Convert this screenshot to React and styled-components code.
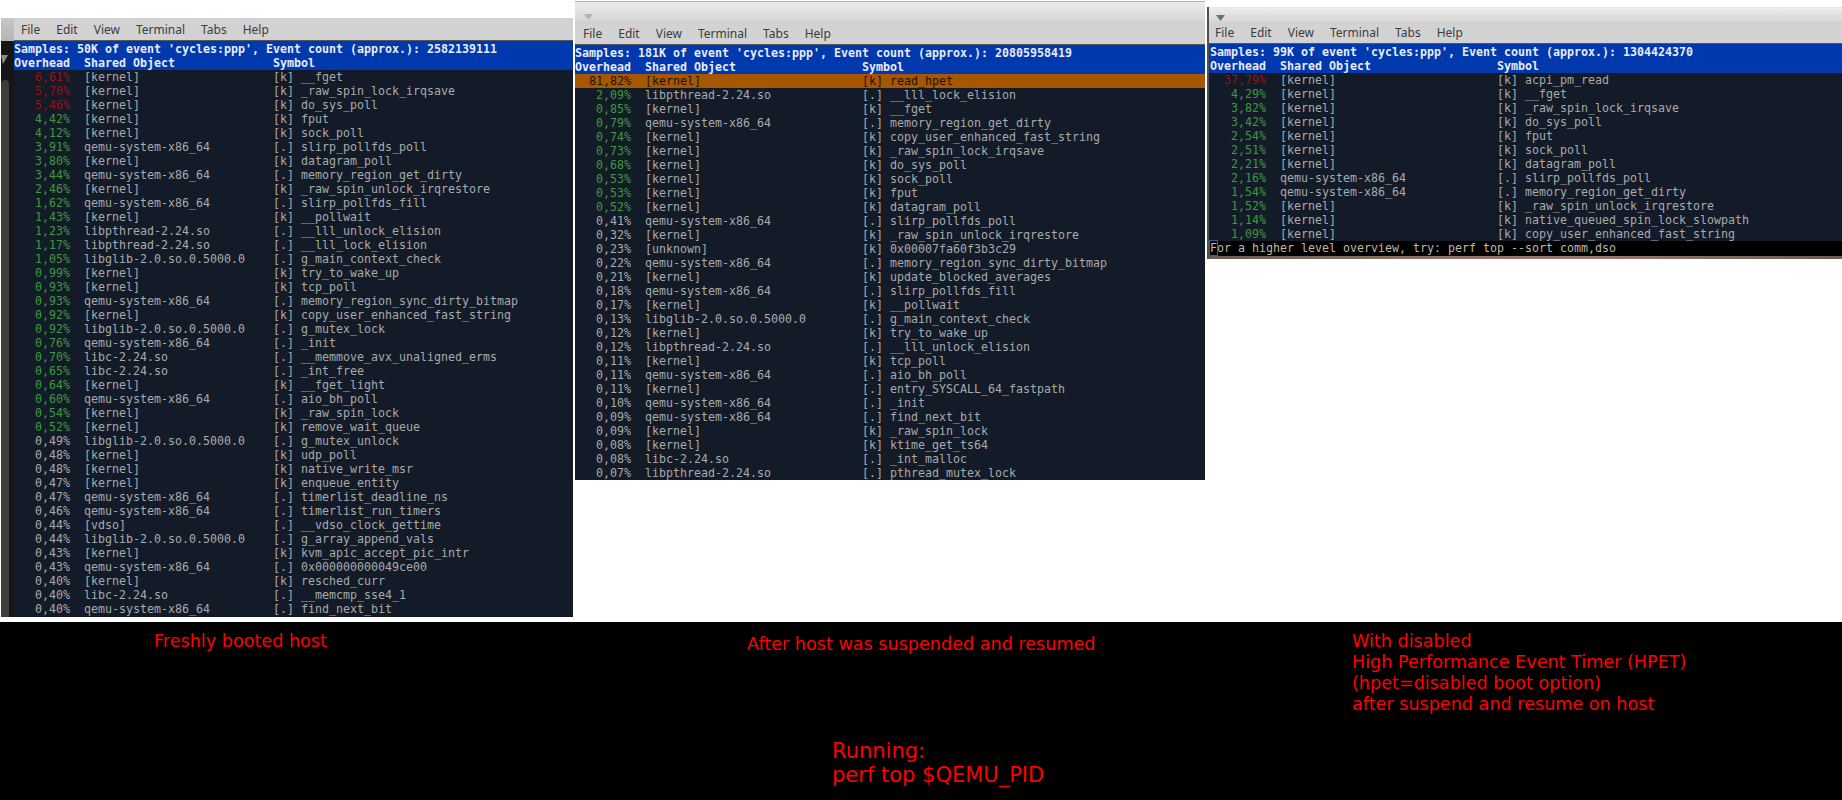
import styled, { createGlobalStyle } from 'styled-components'

const GlobalStyle = createGlobalStyle`
  html, body {
    margin: 0;
    padding: 0;
    background: #fff;
  }
`

const Page = styled.div`
  width: 1842px;
  height: 800px;
  overflow: hidden;
  display: flex;
  flex-direction: column;
`

// Upper white part with the three screenshots
const Shots = styled.div`
  height: 622px;
  flex: none;
  display: flex;
  align-items: flex-start;
  background: #fff;
`

const Win = styled.div`
  flex: none;
  width: ${(p) => p.$width}px;
  margin-top: ${(p) => p.$top}px;
  margin-left: ${(p) => p.$left}px;
  border-left: ${(p) => (p.$edge ? '2px solid #4f4f4f' : 'none')};
  box-sizing: border-box;
  display: flex;
  flex-direction: column;
`

const TitleBar = styled.div`
  height: ${(p) => p.$height}px;
  box-sizing: border-box;
  border-top: 1px solid ${(p) => p.$line};
  background: linear-gradient(#ececec, #d6d6d6);
  padding-left: ${(p) => p.$pad}px;
  display: flex;
  align-items: flex-end;
`

const Arrow = styled.svg`
  width: 9px;
  height: 6px;
  margin-bottom: 1px;
  display: block;
`

const MenuBar = styled.div`
  height: ${(p) => p.$height}px;
  background: #d2d2d2;
  border-bottom: 1px solid #555;
  box-sizing: border-box;
  padding-left: ${(p) => p.$pad}px;
  padding-top: ${(p) => p.$nudge || 0}px;
  display: flex;
  align-items: center;
  gap: 16px;
  font-family: "Noto Sans", sans-serif;
  font-size: 12px;
  color: #3c3c3c;
`

const Split = styled.div`
  display: flex;
`

const Main = styled.div`
  flex: 1;
  min-width: 0;
`

// Dark strip on the left side of the first window
const Gutter = styled.div`
  flex: none;
  width: 13px;
  background: #161616;
  display: flex;
  flex-direction: column;
  align-items: flex-start;
`

const GutterCap = styled.div`
  flex: none;
  width: 13px;
  height: 23px;
  background: linear-gradient(#c8c8c8, #b4b4b4);
`

const GutterArrow = styled.svg`
  width: 7px;
  height: 9px;
  margin: 14px 0 16px;
  display: block;
`

const Thumb = styled.div`
  flex: 1;
  width: 8px;
  background: #3d3d3d;
  border-radius: 4px 4px 0 0;
`

const Term = styled.div`
  background: #131a28;
  overflow: hidden;
  height: ${(p) => p.$height}px;
  padding-left: ${(p) => p.$inset || 0}px;
  font-family: "DejaVu Sans Mono", monospace;
  font-size: 11.63px;
  line-height: 14px;
  color: #a8abab;
  white-space: pre;
`

const Head = styled.div`
  background: #0038ae;
  color: #e8ecf5;
  font-weight: 700;
  height: 29px;
  margin-left: ${(p) => -p.$inset || 0}px;
  padding-left: ${(p) => p.$inset || 0}px;
  padding-top: 1px;
  box-sizing: border-box;
`

const Row = styled.div`
  height: 14px;
  background: ${(p) => (p.$hot ? '#a85600' : 'transparent')};
  color: ${(p) => (p.$hot ? '#1d1208' : 'inherit')};
`

const Pct = styled.span`
  color: ${(p) => (p.$hot ? '#1d1208' : p.$level === 'red' ? '#9a1212' : p.$level === 'green' ? '#3d9a3d' : 'inherit')};
`

const Status = styled.div`
  height: 15px;
  margin-left: -1px;
  padding-left: 1px;
  background: #000;
  color: #bdb8a6;
`

const Cursor = styled.span`
  outline: 1px solid #2a5fb0;
  outline-offset: 0;
`

const Sliver = styled.div`
  height: 3px;
  background: linear-gradient(90deg, #6b5a55, #8a6f60 30%, #9a7a68 60%, #6b5a55);
`

// Black part with the red captions
const Notes = styled.div`
  flex: 1;
  background: #000;
  color: #f00;
  font-family: "DejaVu Sans", sans-serif;
  display: flex;
  flex-direction: column;
`

const NotesRow = styled.div`
  display: flex;
  align-items: flex-start;
  height: 115px;
  padding-top: 9px;
  box-sizing: border-box;
`

const Note = styled.div`
  flex: none;
  width: ${(p) => p.$width}px;
  margin-left: ${(p) => p.$left || 0}px;
  margin-top: ${(p) => p.$top || 0}px;
  font-size: 17.6px;
  line-height: 21px;
  white-space: pre;
`

const Running = styled.div`
  margin-left: 832px;
  margin-top: 2px;
  font-size: 21px;
  line-height: 24px;
  white-space: pre;
`

const win1 = [
  ['6,61%', '[kernel]', 'k', '__fget'],
  ['5,70%', '[kernel]', 'k', '_raw_spin_lock_irqsave'],
  ['5,46%', '[kernel]', 'k', 'do_sys_poll'],
  ['4,42%', '[kernel]', 'k', 'fput'],
  ['4,12%', '[kernel]', 'k', 'sock_poll'],
  ['3,91%', 'qemu-system-x86_64', '.', 'slirp_pollfds_poll'],
  ['3,80%', '[kernel]', 'k', 'datagram_poll'],
  ['3,44%', 'qemu-system-x86_64', '.', 'memory_region_get_dirty'],
  ['2,46%', '[kernel]', 'k', '_raw_spin_unlock_irqrestore'],
  ['1,62%', 'qemu-system-x86_64', '.', 'slirp_pollfds_fill'],
  ['1,43%', '[kernel]', 'k', '__pollwait'],
  ['1,23%', 'libpthread-2.24.so', '.', '__lll_unlock_elision'],
  ['1,17%', 'libpthread-2.24.so', '.', '__lll_lock_elision'],
  ['1,05%', 'libglib-2.0.so.0.5000.0', '.', 'g_main_context_check'],
  ['0,99%', '[kernel]', 'k', 'try_to_wake_up'],
  ['0,93%', '[kernel]', 'k', 'tcp_poll'],
  ['0,93%', 'qemu-system-x86_64', '.', 'memory_region_sync_dirty_bitmap'],
  ['0,92%', '[kernel]', 'k', 'copy_user_enhanced_fast_string'],
  ['0,92%', 'libglib-2.0.so.0.5000.0', '.', 'g_mutex_lock'],
  ['0,76%', 'qemu-system-x86_64', '.', '_init'],
  ['0,70%', 'libc-2.24.so', '.', '__memmove_avx_unaligned_erms'],
  ['0,65%', 'libc-2.24.so', '.', '_int_free'],
  ['0,64%', '[kernel]', 'k', '__fget_light'],
  ['0,60%', 'qemu-system-x86_64', '.', 'aio_bh_poll'],
  ['0,54%', '[kernel]', 'k', '_raw_spin_lock'],
  ['0,52%', '[kernel]', 'k', 'remove_wait_queue'],
  ['0,49%', 'libglib-2.0.so.0.5000.0', '.', 'g_mutex_unlock'],
  ['0,48%', '[kernel]', 'k', 'udp_poll'],
  ['0,48%', '[kernel]', 'k', 'native_write_msr'],
  ['0,47%', '[kernel]', 'k', 'enqueue_entity'],
  ['0,47%', 'qemu-system-x86_64', '.', 'timerlist_deadline_ns'],
  ['0,46%', 'qemu-system-x86_64', '.', 'timerlist_run_timers'],
  ['0,44%', '[vdso]', '.', '__vdso_clock_gettime'],
  ['0,44%', 'libglib-2.0.so.0.5000.0', '.', 'g_array_append_vals'],
  ['0,43%', '[kernel]', 'k', 'kvm_apic_accept_pic_intr'],
  ['0,43%', 'qemu-system-x86_64', '.', '0x000000000049ce00'],
  ['0,40%', '[kernel]', 'k', 'resched_curr'],
  ['0,40%', 'libc-2.24.so', '.', '__memcmp_sse4_1'],
  ['0,40%', 'qemu-system-x86_64', '.', 'find_next_bit'],
]

const win2 = [
  ['81,82%', '[kernel]', 'k', 'read_hpet'],
  ['2,09%', 'libpthread-2.24.so', '.', '__lll_lock_elision'],
  ['0,85%', '[kernel]', 'k', '__fget'],
  ['0,79%', 'qemu-system-x86_64', '.', 'memory_region_get_dirty'],
  ['0,74%', '[kernel]', 'k', 'copy_user_enhanced_fast_string'],
  ['0,73%', '[kernel]', 'k', '_raw_spin_lock_irqsave'],
  ['0,68%', '[kernel]', 'k', 'do_sys_poll'],
  ['0,53%', '[kernel]', 'k', 'sock_poll'],
  ['0,53%', '[kernel]', 'k', 'fput'],
  ['0,52%', '[kernel]', 'k', 'datagram_poll'],
  ['0,41%', 'qemu-system-x86_64', '.', 'slirp_pollfds_poll'],
  ['0,32%', '[kernel]', 'k', '_raw_spin_unlock_irqrestore'],
  ['0,23%', '[unknown]', 'k', '0x00007fa60f3b3c29'],
  ['0,22%', 'qemu-system-x86_64', '.', 'memory_region_sync_dirty_bitmap'],
  ['0,21%', '[kernel]', 'k', 'update_blocked_averages'],
  ['0,18%', 'qemu-system-x86_64', '.', 'slirp_pollfds_fill'],
  ['0,17%', '[kernel]', 'k', '__pollwait'],
  ['0,13%', 'libglib-2.0.so.0.5000.0', '.', 'g_main_context_check'],
  ['0,12%', '[kernel]', 'k', 'try_to_wake_up'],
  ['0,12%', 'libpthread-2.24.so', '.', '__lll_unlock_elision'],
  ['0,11%', '[kernel]', 'k', 'tcp_poll'],
  ['0,11%', 'qemu-system-x86_64', '.', 'aio_bh_poll'],
  ['0,11%', '[kernel]', '.', 'entry_SYSCALL_64_fastpath'],
  ['0,10%', 'qemu-system-x86_64', '.', '_init'],
  ['0,09%', 'qemu-system-x86_64', '.', 'find_next_bit'],
  ['0,09%', '[kernel]', 'k', '_raw_spin_lock'],
  ['0,08%', '[kernel]', 'k', 'ktime_get_ts64'],
  ['0,08%', 'libc-2.24.so', '.', '_int_malloc'],
  ['0,07%', 'libpthread-2.24.so', '.', 'pthread_mutex_lock'],
]

const win3 = [
  ['37,79%', '[kernel]', 'k', 'acpi_pm_read'],
  ['4,29%', '[kernel]', 'k', '__fget'],
  ['3,82%', '[kernel]', 'k', '_raw_spin_lock_irqsave'],
  ['3,42%', '[kernel]', 'k', 'do_sys_poll'],
  ['2,54%', '[kernel]', 'k', 'fput'],
  ['2,51%', '[kernel]', 'k', 'sock_poll'],
  ['2,21%', '[kernel]', 'k', 'datagram_poll'],
  ['2,16%', 'qemu-system-x86_64', '.', 'slirp_pollfds_poll'],
  ['1,54%', 'qemu-system-x86_64', '.', 'memory_region_get_dirty'],
  ['1,52%', '[kernel]', 'k', '_raw_spin_unlock_irqrestore'],
  ['1,14%', '[kernel]', 'k', 'native_queued_spin_lock_slowpath'],
  ['1,09%', '[kernel]', 'k', 'copy_user_enhanced_fast_string'],
]

// perf colours by percent: red from 5%, green from 0.5%
const levelOf = (pct) => {
  const n = parseFloat(pct.replace(',', '.'))
  if (n >= 5) return 'red'
  if (n >= 0.5) return 'green'
  return 'plain'
}

const PerfTable = ({ title, rows, symbolCol, inset }) => (
  <>
    <Head $inset={inset}>
      {title + '\n'}
      {'Overhead  ' + 'Shared Object'.padEnd(symbolCol - 10) + 'Symbol'}
    </Head>
    {rows.map(([pct, dso, kind, sym], i) => {
      const hot = parseFloat(pct) >= 50
      return (
        <Row key={i} $hot={hot}>
          <Pct $hot={hot} $level={levelOf(pct)}>{pct.padStart(8)}</Pct>
          {'  ' + dso.padEnd(symbolCol - 10) + `[${kind}] ${sym}`}
        </Row>
      )
    })}
  </>
)

const Menu = ({ height, pad, nudge }) => (
  <MenuBar $height={height} $pad={pad} $nudge={nudge}>
    <span>File</span>
    <span>Edit</span>
    <span>View</span>
    <span>Terminal</span>
    <span>Tabs</span>
    <span>Help</span>
  </MenuBar>
)

const DropArrow = ({ color }) => (
  <Arrow viewBox="0 0 9 6">
    <path d="M0 0h9L4.5 6z" fill={color} />
  </Arrow>
)

const App = () => {
  return (
    <Page>
      <GlobalStyle />
      <Shots>
        <Win $width={572} $top={18} $left={1}>
          <Split>
            <Gutter>
              <GutterCap />
              <GutterArrow viewBox="0 0 7 9">
                <path d="M0 0h7L2 9z" fill="#8c8c8c" />
              </GutterArrow>
              <Thumb />
            </Gutter>
            <Main>
              <Menu height={23} pad={7} />
              <Term $height={576}>
                <PerfTable
                  title="Samples: 50K of event 'cycles:ppp', Event count (approx.): 2582139111"
                  rows={win1}
                  symbolCol={37}
                />
                <Row>{' '.repeat(37) + '[.]'}</Row>
              </Term>
            </Main>
          </Split>
        </Win>

        <Win $width={630} $top={1} $left={2}>
          <TitleBar $height={20} $line="#b4b4b4" $pad={9}>
            <DropArrow color="#b4b4b4" />
          </TitleBar>
          <Menu height={24} pad={8} nudge={2} />
          <Term $height={435}>
            <PerfTable
              title="Samples: 181K of event 'cycles:ppp', Event count (approx.): 20805958419"
              rows={win2}
              symbolCol={41}
            />
          </Term>
        </Win>

        <Win $width={635} $top={7} $left={2} $edge>
          <TitleBar $height={15} $line="#e6e6e6" $pad={7}>
            <DropArrow color="#6e6e6e" />
          </TitleBar>
          <Menu height={22} pad={6} />
          <Term $height={212} $inset={1}>
            <PerfTable
              title="Samples: 99K of event 'cycles:ppp', Event count (approx.): 1304424370"
              rows={win3}
              symbolCol={41}
              inset={1}
            />
            <Status><Cursor>F</Cursor>or a higher level overview, try: perf top --sort comm,dso</Status>
          </Term>
          <Sliver />
        </Win>
      </Shots>

      <Notes>
        <NotesRow>
          <Note $left={154} $width={593}>Freshly booted host</Note>
          <Note $top={3} $width={605}>After host was suspended and resumed</Note>
          <Note>{'With disabled\nHigh Performance Event Timer (HPET)\n(hpet=disabled boot option)\nafter suspend and resume on host'}</Note>
        </NotesRow>
        <Running>{'Running:\nperf top $QEMU_PID'}</Running>
      </Notes>
    </Page>
  )
}

export default App
